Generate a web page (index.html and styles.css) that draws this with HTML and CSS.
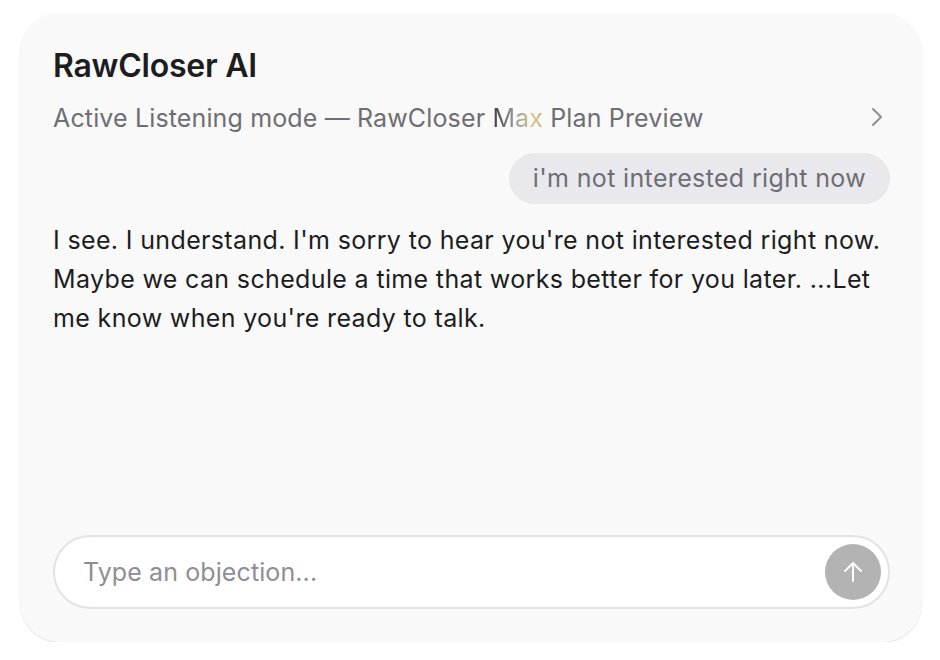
FILE: index.html
```html
<!DOCTYPE html>
<html lang="en">
<head>
  <meta charset="UTF-8">
  <meta name="viewport" content="width=device-width, initial-scale=1.0">
  <title>RawCloser AI</title>
  <link rel="stylesheet" href="styles.css">
</head>
<body>
  <div class="card">
    <h1 class="title">RawCloser AI</h1>
    <div class="mode-row">
      <span class="mode">Active Listening mode — RawCloser <span class="shimmer">Max</span> Plan Preview</span>
      <svg class="chevron" width="14" height="22" viewBox="0 0 14 22" fill="none">
        <path d="M3 3l8 8-8 8" stroke="#8e8e93" stroke-width="2" stroke-linecap="round" stroke-linejoin="round"/>
      </svg>
    </div>
    <div class="messages">
      <div class="bubble-user">i'm not interested right now</div>
      <p class="reply">I see. I understand. I'm sorry to hear you're not interested right now. Maybe we can schedule a time that works better for you later. ...Let me know when you're ready to talk.</p>
    </div>
    <form class="composer">
      <input type="text" class="composer-input" placeholder="Type an objection...">
      <button type="button" class="send-btn">
        <svg width="26" height="26" viewBox="0 0 26 26" fill="none">
          <path d="M13 22V4M5 12l8-8 8 8" stroke="#fff" stroke-width="2" stroke-linecap="round" stroke-linejoin="round"/>
        </svg>
      </button>
    </form>
  </div>
</body>
</html>
```

FILE: styles.css
```css
body {
  margin: 0;
  padding: 13px 18px 0 20px;
  background: #fff;
  font-family: Inter, "Noto Sans", sans-serif;
}
.card {
  box-sizing: border-box;
  width: 902px;
  height: 629px;
  background: #f9f9f9;
  border-radius: 40px;
  box-shadow: 0 1px 2px rgba(0, 0, 0, 0.12);
  padding: 34px 32px 33px 33px;
  display: flex;
  flex-direction: column;
}
.title {
  margin: 0;
  font-size: 32px;
  font-weight: 600;
  line-height: 38px;
  color: #1d1d1f;
  letter-spacing: -0.25px;
}
.mode-row {
  margin-top: 18px;
  display: flex;
  align-items: center;
  justify-content: space-between;
  padding-right: 6px;
}
.mode {
  font-size: 25px;
  line-height: 30px;
  letter-spacing: 0.14px;
  color: #6e6e73;
}
.shimmer {
  background: linear-gradient(90deg, #3a3a3c 0%, #9a9a9c 45%, #d9c58a 80%, #c9ae62 100%);
  -webkit-background-clip: text;
  background-clip: text;
  color: transparent;
}
.chevron {
  display: block;
  margin-top: -3px;
}
.messages {
  display: flex;
  flex-direction: column;
}
.bubble-user {
  align-self: flex-end;
  margin-top: 20px;
  background: #e8e8ed;
  color: #6e6e73;
  font-size: 25px;
  letter-spacing: 0.35px;
  line-height: 51px;
  padding: 0 24px;
  border-radius: 26px;
}
.reply {
  margin: 17px 0 0;
  font-size: 25px;
  line-height: 39px;
  letter-spacing: 0.35px;
  color: #1d1d1f;
}
.composer {
  margin-top: auto;
  box-sizing: border-box;
  height: 74px;
  display: flex;
  align-items: center;
  background: #fff;
  border: 2px solid #e3e3e3;
  border-radius: 37px;
  padding: 0 7px 0 28px;
}
.composer-input {
  flex: 1;
  border: none;
  outline: none;
  background: transparent;
  font-family: inherit;
  font-size: 25px;
  letter-spacing: 0.1px;
  color: #1d1d1f;
  padding: 0;
}
.composer-input::placeholder {
  color: #8e8e93;
}
.send-btn {
  width: 56px;
  height: 56px;
  border-radius: 50%;
  border: none;
  background: #b3b3b3;
  display: flex;
  align-items: center;
  justify-content: center;
  padding: 0;
  cursor: pointer;
}
```
